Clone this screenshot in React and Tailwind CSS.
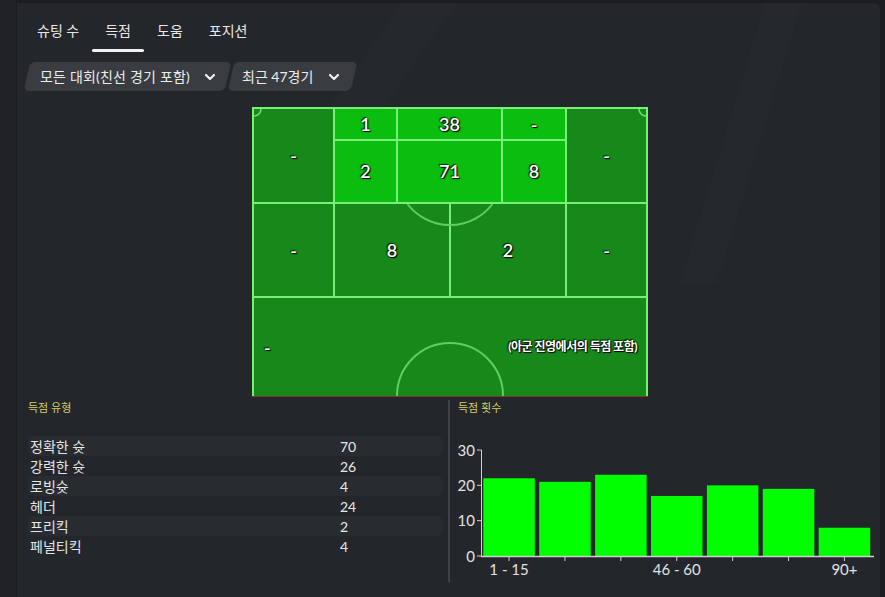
import React from "react";

const F = "font-['Lato','Noto_Sans_CJK_KR',sans-serif]";
const shadow = "[text-shadow:0_0_2px_#000,1px_1px_1px_#000,-1px_-1px_1px_#000a]";

function Chevron({ ml }) {
  return (
    <svg width="12" height="8" viewBox="0 0 12 8" className={ml}>
      <path d="M2 2 L6 6 L10 2" fill="none" stroke="#f0f0f0" strokeWidth="2.2" strokeLinecap="round" strokeLinejoin="round" />
    </svg>
  );
}

function Pitch() {
  const dark = "bg-[#16891a]";
  const bright = "bg-[#0bbd0e]";
  const num = `text-white text-[18px] font-semibold ${shadow}`;
  return (
    <div className="relative ml-[235px] mt-[16px] w-[396px] bg-[#78f078] pt-[2px] px-[2px] border-b border-[#7a3a2e]">
      <div className="flex flex-col gap-[2px]">
        <div className="flex h-[93px] gap-[2px]">
          <div className={`w-[79px] ${dark} flex items-center justify-center ${num}`}>-</div>
          <div className="w-[230px] flex flex-col gap-[2px]">
            <div className="flex h-[30px] gap-[2px]">
              <div className={`w-[61px] ${bright} flex items-center justify-center ${num}`}>1</div>
              <div className={`w-[103px] ${bright} flex items-center justify-center ${num}`}>38</div>
              <div className={`w-[62px] ${bright} flex items-center justify-center ${num}`}>-</div>
            </div>
            <div className="flex h-[61px] gap-[2px]">
              <div className={`w-[61px] ${bright} flex items-center justify-center ${num}`}>2</div>
              <div className={`w-[103px] ${bright} flex items-center justify-center ${num}`}>71</div>
              <div className={`w-[62px] ${bright} flex items-center justify-center ${num}`}>8</div>
            </div>
          </div>
          <div className={`w-[79px] ${dark} flex items-center justify-center ${num}`}>-</div>
        </div>
        <div className="flex h-[92px] gap-[2px]">
          <div className={`w-[79px] ${dark} flex items-center justify-center ${num}`}>-</div>
          <div className={`w-[114px] ${dark} flex items-center justify-center ${num}`}>8</div>
          <div className={`w-[114px] ${dark} flex items-center justify-center ${num}`}>2</div>
          <div className={`w-[79px] ${dark} flex items-center justify-center ${num}`}>-</div>
        </div>
        <div className={`h-[98px] ${dark} flex items-center justify-between pl-[10px] pr-[9px]`}>
          <span className={num}>-</span>
          <span className={`text-white text-[12px] font-bold tracking-[-0.5px] ${shadow}`}>(아군 진영에서의 득점 포함)</span>
        </div>
      </div>
      <svg className="absolute inset-0 pointer-events-none" width="396" height="290" viewBox="0 0 396 290">
        <path d="M9 2 A7 7 0 0 1 2 9" fill="none" stroke="#6fe06f" strokeWidth="1.5" />
        <path d="M387 2 A7 7 0 0 0 394 9" fill="none" stroke="#6fe06f" strokeWidth="1.5" />
        <path d="M155.5 97 A53.5 53.5 0 0 0 240.5 97" fill="none" stroke="#5fcf5f" strokeWidth="2" />
        <path d="M145 289 A53 53 0 0 1 251 289" fill="none" stroke="#5fcf5f" strokeWidth="2" />
      </svg>
    </div>
  );
}

const rows = [
  ["정확한 슛", "70"],
  ["강력한 슛", "26"],
  ["로빙슛", "4"],
  ["헤더", "24"],
  ["프리킥", "2"],
  ["페널티킥", "4"],
];

function Chart() {
  const vals = [22, 21, 23, 17, 20, 19, 8];
  const base = 556;
  const k = 106 / 30;
  const step = 55.9;
  const x0 = 483.3;
  const w = 51.5;
  return (
    <svg width="430" height="175" viewBox="450 418 430 175" className="block mt-[3px]">
      {vals.map((v, i) => (
        <rect key={i} x={x0 + i * step} y={base - v * k} width={w} height={v * k} fill="#00ff00" />
      ))}
      <line x1="481.5" y1="450" x2="481.5" y2="556.5" stroke="#cfcfcf" strokeWidth="1" />
      <line x1="481" y1="556.5" x2="874" y2="556.5" stroke="#cfcfcf" strokeWidth="1.5" />
      {[0, 10, 20, 30].map((t) => {
        const y = base - t * k;
        return (
          <g key={t}>
            <line x1="477" y1={y} x2="481.5" y2={y} stroke="#cfcfcf" strokeWidth="1" />
            <text x="475" y={y + 5.5} textAnchor="end" fontSize="15" fill="#e2e2e2" fontFamily="Lato, sans-serif">{t}</text>
          </g>
        );
      })}
      {vals.map((v, i) => {
        const cx = x0 + i * step + w / 2;
        return <line key={i} x1={cx} y1="556.5" x2={cx} y2="561" stroke="#cfcfcf" strokeWidth="1" />;
      })}
      {[
        [0, "1 - 15"],
        [3, "46 - 60"],
        [6, "90+"],
      ].map(([i, s]) => (
        <text key={i} x={x0 + i * step + w / 2} y="574.5" textAnchor="middle" fontSize="15" fill="#e2e2e2" fontFamily="Lato, sans-serif">{s}</text>
      ))}
    </svg>
  );
}

export default function App() {
  return (
    <div className={`w-[885px] h-[597px] overflow-hidden bg-[#1b1d20] flex ${F}`}>
      <div className="w-[17px] h-full bg-[#1f2124] border-r border-[#1a1c1f]" />
      <div className="relative mt-[3px] w-[863px] h-[594px] bg-[#23262a] rounded-tr-[6px] overflow-hidden">
        <svg className="absolute inset-0 pointer-events-none" width="863" height="594">
          <polygon points="385,0 440,0 300,200 245,200" fill="#ffffff" opacity="0.01" />
          <polygon points="748,0 785,0 700,280 663,280" fill="#ffffff" opacity="0.012" />
        </svg>
        <div className="relative">
          {/* Tabs */}
          <div className="flex pl-[7px] pt-[18px]">
            {["슈팅 수", "득점", "도움", "포지션"].map((t, i) => (
              <div key={t} className="flex flex-col items-center">
                <div className="px-[13px] text-[14px] leading-[20px] text-[#e8e8e8]">{t}</div>
                <div className={`mt-[8px] h-[3px] w-full rounded-full ${i === 1 ? "bg-[#f2f2f2]" : "bg-transparent"}`} />
              </div>
            ))}
          </div>
          {/* Dropdowns */}
          <div className="flex mt-[10px] pl-[10px] h-[29px]">
            <div className="relative w-[201px] h-[29px]">
              <div className="absolute inset-0 -skew-x-[13deg] rounded-[5px] bg-[#393c41]" />
              <div className="relative flex items-center h-full pl-[13px] text-[14px] tracking-[0.2px] text-[#ececec]">
                모든 대회(친선 경기 포함)
                <Chevron ml="ml-[14px]" />
              </div>
            </div>
            <div className="relative ml-[3px] w-[123px] h-[29px]">
              <div className="absolute inset-0 -skew-x-[13deg] rounded-[5px] bg-[#393c41]" />
              <div className="relative flex items-center h-full pl-[11px] text-[14px] text-[#ececec]">
                최근 47경기
                <Chevron ml="ml-[15px]" />
              </div>
            </div>
          </div>
          <Pitch />
          {/* Bottom */}
          <div className="flex">
            <div className="w-[431px] pl-[11px]">
              <div className="mt-[4px] text-[11px] leading-[14px] text-[#d6cf6a]">득점 유형</div>
              <div className="mt-[21px] w-[415px]">
                {rows.map(([a, b], i) => (
                  <div key={a} className={`grid grid-cols-[310px_1fr] h-[20px] items-center rounded-[6px] pl-[2px] text-[14px] text-[#e6e6e6] ${i % 2 === 0 ? "bg-[#282b2f]" : ""}`}>
                    <span>{a}</span>
                    <span>{b}</span>
                  </div>
                ))}
              </div>
            </div>
            <div className="mt-[3px] h-[182px] w-[2px] bg-[#3e4146]" />
            <div className="flex-1">
              <div className="mt-[4px] pl-[8px] text-[11px] leading-[14px] text-[#d6cf6a]">득점 횟수</div>
              <Chart />
            </div>
          </div>
        </div>
      </div>
      <div className="flex-1 bg-[#1b1d20]" />
    </div>
  );
}
